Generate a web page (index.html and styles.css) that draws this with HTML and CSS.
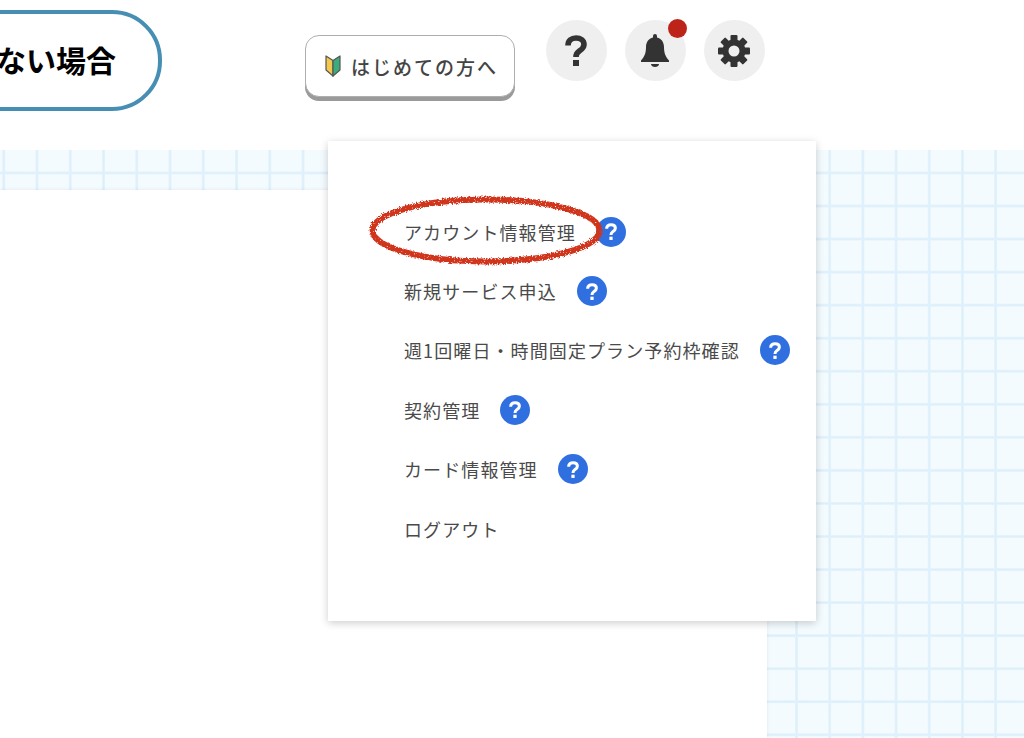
FILE: index.html
```html
<!DOCTYPE html>
<html lang="ja">
<head>
<meta charset="utf-8">
<title>アカウント情報管理</title>
<link rel="stylesheet" href="styles.css">
</head>
<body>
<svg class="defs" width="0" height="0" aria-hidden="true">
  <defs>
    <symbol id="q" viewBox="0 0 22 31">
      <path d="M3 10.500C3 5.500 6.500 3 11 3c4.600 0 8 2.500 8 6.500 0 3.500-2.300 5-4.800 6.600C12.100 17.500 11 18.800 11 22" fill="none" stroke="currentColor" stroke-width="5.600"/>
      <rect x="8" y="25" width="6" height="6" fill="currentColor"/>
    </symbol>
    <filter id="crayon" x="-5%" y="-15%" width="110%" height="130%">
      <feTurbulence type="fractalNoise" baseFrequency="0.7" numOctaves="2" seed="4" result="wobble"/>
      <feDisplacementMap in="SourceGraphic" in2="wobble" scale="4.500" result="rough"/>
      <feTurbulence type="fractalNoise" baseFrequency="0.8" numOctaves="1" seed="9"/>
      <feColorMatrix type="matrix" values="0 0 0 0 0  0 0 0 0 0  0 0 0 0 0  6 0 0 0 -1.200" result="fleck"/>
      <feComposite in="rough" in2="fleck" operator="in"/>
      <feGaussianBlur stdDeviation="0.4"/>
    </filter>
  </defs>
</svg>
<div class="page">
  <header class="header">
    <div class="pill">ない場合</div>
    <button class="guide">
      <svg class="leaf" viewBox="0 0 18 22"><path d="M9 5.500 2 1v14l7 6z" fill="#f3c84e" stroke="#555" stroke-width="1.200" stroke-linejoin="round"/><path d="M9 5.500 16 1v14l-7 6z" fill="#3dac7c" stroke="#555" stroke-width="1.200" stroke-linejoin="round"/></svg>
      <span>はじめての方へ</span>
    </button>
    <div class="tools">
      <div class="tool"><svg class="ic-q"><use href="#q"/></svg></div>
      <div class="tool">
        <svg class="ic-bell" viewBox="0 0 28 33" fill="#333"><path d="M14 0a2 2 0 0 1 2 2v1.600C20.500 4.500 23 8.500 23 13c0 7 2 10 5 13.500V28H0v-1.500C3 23 5 20 5 13c0-4.500 2.500-8.500 7-9.400V2a2 2 0 0 1 2-2z"/><path d="M10 30h8c0 2-2 3-4 3s-4-1-4-3z"/></svg>
        <span class="badge"></span>
      </div>
      <div class="tool">
        <svg class="ic-gear" viewBox="0 0 32 32" fill="#333">
          <circle cx="16" cy="16" r="8.500" fill="none" stroke="#333" stroke-width="6"/>
          <rect x="12.500" y="0" width="7" height="6" rx="1"/>
          <rect x="12.500" y="0" width="7" height="6" rx="1" transform="rotate(45 16 16)"/>
          <rect x="12.500" y="0" width="7" height="6" rx="1" transform="rotate(90 16 16)"/>
          <rect x="12.500" y="0" width="7" height="6" rx="1" transform="rotate(135 16 16)"/>
          <rect x="12.500" y="0" width="7" height="6" rx="1" transform="rotate(180 16 16)"/>
          <rect x="12.500" y="0" width="7" height="6" rx="1" transform="rotate(225 16 16)"/>
          <rect x="12.500" y="0" width="7" height="6" rx="1" transform="rotate(270 16 16)"/>
          <rect x="12.500" y="0" width="7" height="6" rx="1" transform="rotate(315 16 16)"/>
        </svg>
      </div>
    </div>
  </header>
  <main class="main">
    <div class="strip"></div>
    <div class="panel"></div>
  </main>
  <nav class="menu">
    <ul class="list">
      <li class="item"><span>アカウント情報管理</span><span class="help"><svg class="ic-help"><use href="#q"/></svg></span></li>
      <li class="item"><span>新規サービス申込</span><span class="help"><svg class="ic-help"><use href="#q"/></svg></span></li>
      <li class="item"><span>週1回曜日・時間固定プラン予約枠確認</span><span class="help"><svg class="ic-help"><use href="#q"/></svg></span></li>
      <li class="item"><span>契約管理</span><span class="help"><svg class="ic-help"><use href="#q"/></svg></span></li>
      <li class="item"><span>カード情報管理</span><span class="help"><svg class="ic-help"><use href="#q"/></svg></span></li>
      <li class="item"><span>ログアウト</span></li>
    </ul>
    <svg class="oval" viewBox="0 0 240 72"><ellipse cx="118" cy="35.500" rx="113.500" ry="31" fill="none" stroke="#d0361e" stroke-width="6" filter="url(#crayon)"/></svg>
  </nav>
</div>
</body>
</html>
```

FILE: styles.css
```css
* { box-sizing: border-box; }
html, body { margin: 0; padding: 0; }
body {
  width: 1024px;
  height: 738px;
  overflow: hidden;
  background: #fff;
  font-family: "Noto Sans CJK JP", "Noto Sans", sans-serif;
}
.defs { position: absolute; }
.page { position: relative; width: 1024px; height: 738px; display: flex; flex-direction: column; overflow: hidden; }

.header { height: 150px; flex: none; display: flex; align-items: flex-start; background: #fff; }
.pill {
  flex: none;
  width: 222px;
  height: 101px;
  margin: 10px 0 0 -60px;
  padding: 0 0 4px 52px;
  border: 4px solid #468eb3;
  border-radius: 50px;
  display: flex;
  align-items: center;
  font-size: 30px;
  font-weight: 700;
  color: #000;
  white-space: nowrap;
}
.guide {
  flex: none;
  width: 210px;
  height: 62px;
  margin: 35px 0 0 143px;
  padding: 0 0 0 18px;
  display: flex;
  align-items: center;
  gap: 9px;
  background: #fff;
  border: 1px solid #aeaeae;
  border-radius: 14px;
  box-shadow: 0 4px 0 #9a9a9a;
  font-family: inherit;
  font-size: 19px;
  font-weight: 500;
  letter-spacing: 2px;
  color: #444;
  white-space: nowrap;
}
.leaf { width: 18px; height: 22px; flex: none; }
.tools { display: flex; gap: 18.5px; margin: 20px 0 0 31px; }
.tool {
  position: relative;
  width: 60.6px;
  height: 61px;
  border-radius: 50%;
  background: #efefef;
  display: flex;
  align-items: center;
  justify-content: center;
}
.ic-q { width: 22px; height: 31px; color: #333; }
.ic-bell { width: 28px; height: 33px; }
.ic-gear { width: 32px; height: 32px; }
.badge { position: absolute; top: -1px; right: -1px; width: 19px; height: 19px; border-radius: 50%; background: #bd2419; }

.main {
  flex: 1;
  display: flex;
  flex-direction: column;
  background-color: #f4fbfe;
  background-image:
    linear-gradient(to right, #eaf6fd 0, #dceffb 1px, #dceffb 2px, #eaf6fd 3px, transparent 3px),
    linear-gradient(to bottom, #eaf6fd 0, #dceffb 1px, #dceffb 2px, #eaf6fd 3px, transparent 3px);
  background-size: 33.2px 33.05px;
  background-position: 31.7px 21.5px;
}
.strip {
  flex: none;
  width: 330px;
  height: 40px;
  background-color: #f4fbfe;
  background-image:
    linear-gradient(to right, #eaf6fd 0, #dceffb 1px, #dceffb 2px, #eaf6fd 3px, transparent 3px),
    linear-gradient(to bottom, #eaf6fd 0, #dceffb 1px, #dceffb 2px, #eaf6fd 3px, transparent 3px);
  background-size: 33.25px 33.05px;
  background-position: 2.3px 21.5px;
}
.panel { flex: 1; width: 767px; background: #fff; box-shadow: 0 0 4px rgba(0,0,0,.08); }

.menu {
  position: absolute;
  top: 141px;
  left: 328px;
  width: 488px;
  height: 480px;
  padding: 61px 0 0 76px;
  background: #fff;
  box-shadow: 0 2px 8px rgba(0,0,0,.2);
}
.list { list-style: none; margin: 0; padding: 0; display: flex; flex-direction: column; }
.item {
  height: 59.4px;
  display: flex;
  align-items: center;
  gap: 20px;
  font-size: 18px;
  letter-spacing: 1.1px;
  color: #4a4a4a;
  white-space: nowrap;
}
.help {
  flex: none;
  width: 30px;
  height: 30px;
  border-radius: 50%;
  background: #2f6fe0;
  display: flex;
  align-items: center;
  justify-content: center;
}
.ic-help { width: 12px; height: 17px; color: #fff; }
.oval { position: absolute; top: 54px; left: 40px; width: 240px; height: 72px; overflow: visible; }
```
